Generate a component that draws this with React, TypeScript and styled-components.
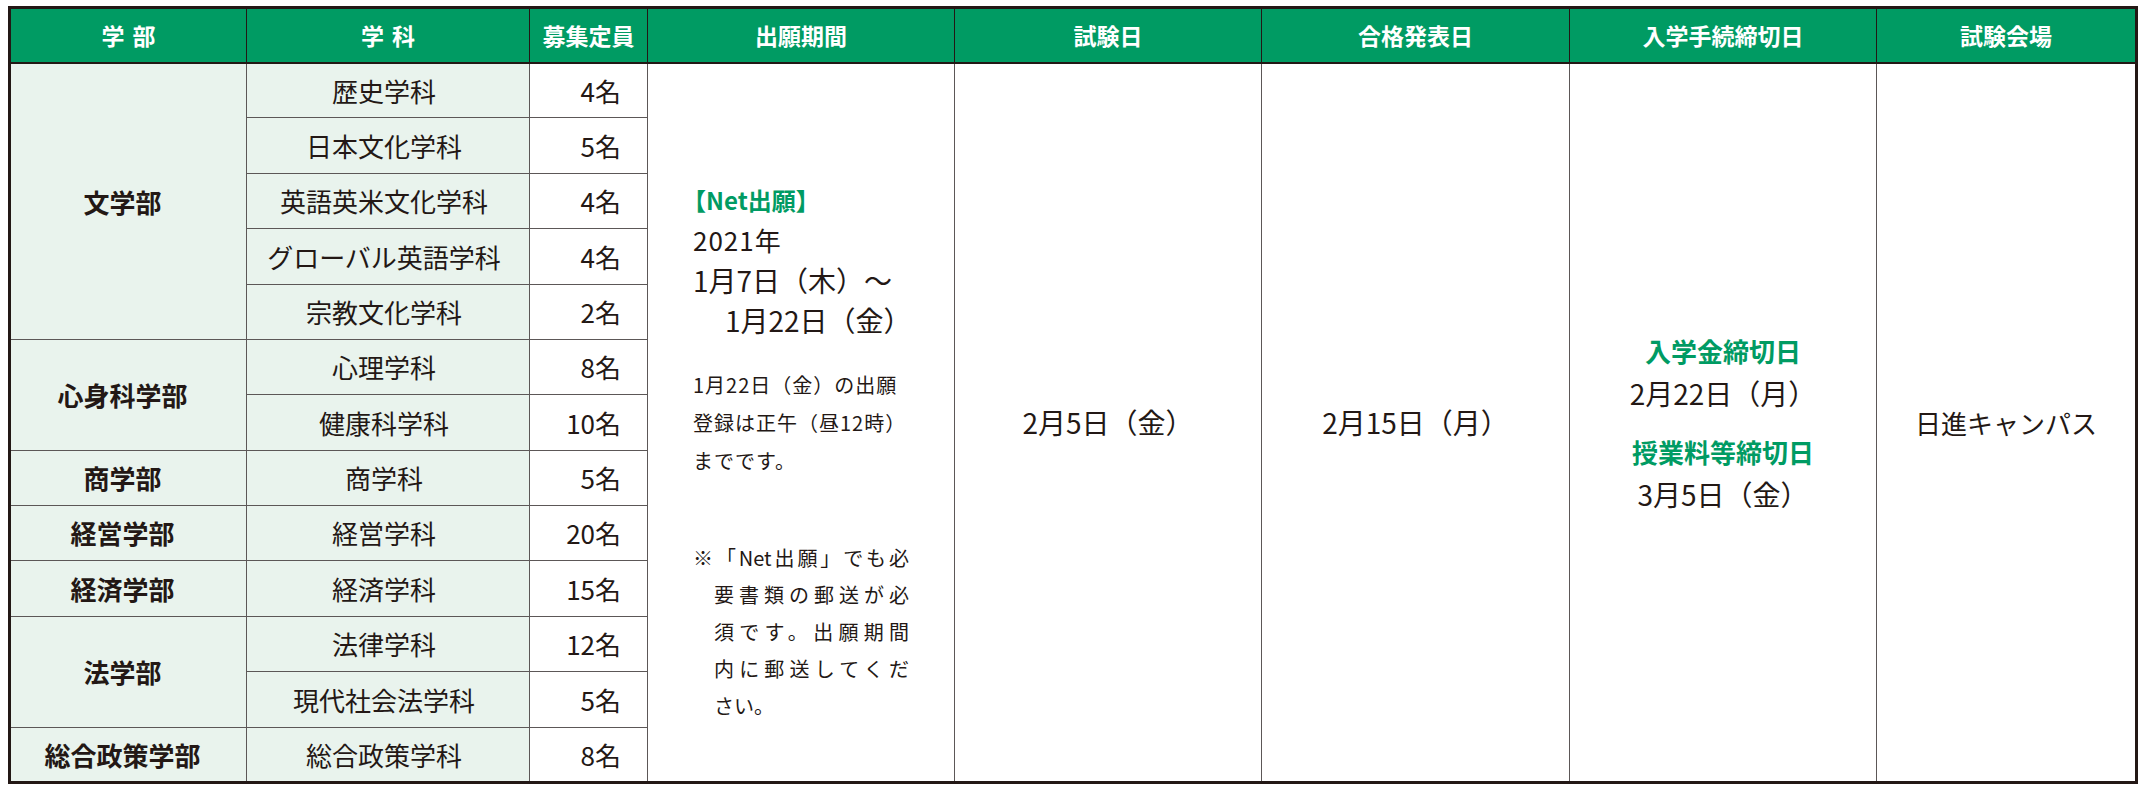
import styled, { createGlobalStyle } from 'styled-components';

const GREEN = '#009b63';
const INK = '#231815';
const MINT = '#e9f3ed';
const RULE = '#5c5757';

const GlobalStyle = createGlobalStyle`
  html, body {
    margin: 0;
    padding: 0;
    background: #fff;
  }
  body {
    font-family: 'Noto Sans CJK JP', 'Noto Sans', sans-serif;
    color: ${INK};
  }
`;

const Page = styled.div`
  padding: 6px 9px 0 8px;
`;

const Table = styled.table`
  width: 2127px;
  table-layout: fixed;
  border-collapse: collapse;
  border: 3px solid ${INK};
`;

const Col = styled.col<{ $w: number }>`
  width: ${(p) => p.$w}px;
`;

const HeadRow = styled.tr`
  height: 55px;
`;

const BodyRow = styled.tr<{ $h: number }>`
  height: ${(p) => p.$h}px;
`;

const Th = styled.th<{ $spaced?: boolean }>`
  background: ${GREEN};
  color: #fff;
  font-size: 23px;
  font-weight: 700;
  text-align: center;
  vertical-align: middle;
  padding: 0 0 0 ${(p) => (p.$spaced ? '8px' : '0')};
  letter-spacing: ${(p) => (p.$spaced ? '8px' : '0')};
  border-left: 1.5px solid ${INK};
  border-bottom: 2px solid ${INK};
`;

const Cell = styled.td`
  padding: 0;
  border: 1.5px solid ${RULE};
  font-size: 26px;
  line-height: 1.2;
  vertical-align: middle;
`;

const FacultyCell = styled(Cell)`
  background: ${MINT};
  font-weight: 700;
  text-align: center;
  padding-right: 12px;
`;

const DeptCell = styled(Cell)`
  background: ${MINT};
  text-align: center;
  padding-right: 8px;
`;

const QuotaCell = styled(Cell)`
  text-align: right;
  padding-right: 26px;
`;

const PeriodCell = styled(Cell)`
  vertical-align: top;
  padding: 116px 0 0 45px;
`;

const CenterCell = styled(Cell)`
  text-align: center;
`;

const NetLabel = styled.div`
  color: ${GREEN};
  font-size: 24px;
  font-weight: 700;
  line-height: 40px;
  margin-left: -11px;
`;

const Year = styled.div`
  font-size: 26px;
  line-height: 40px;
  letter-spacing: 1px;
`;

const BigDate = styled.div<{ $indent?: boolean }>`
  font-size: 28px;
  line-height: 40px;
  padding-left: ${(p) => (p.$indent ? '32px' : '0')};
`;

const Note = styled.div`
  margin-top: 26px;
  font-size: 20px;
  line-height: 38px;
  letter-spacing: 1px;
`;

const Caution = styled.div`
  width: 195px;
  margin-top: 59px;
  padding-left: 21px;
  font-size: 20px;
  line-height: 37px;
`;

const CautionLine = styled.span<{ $first?: boolean; $last?: boolean }>`
  display: block;
  text-align: justify;
  text-align-last: ${(p) => (p.$last ? 'left' : 'justify')};
  margin-left: ${(p) => (p.$first ? '-21px' : '0')};
`;

const DateText = styled.div`
  font-size: 28px;
  line-height: 42px;
`;

const GreenLabel = styled.div<{ $gap?: boolean }>`
  color: ${GREEN};
  font-size: 26px;
  font-weight: 700;
  line-height: 42px;
  margin-top: ${(p) => (p.$gap ? '17px' : '0')};
`;

const Venue = styled.div`
  font-size: 26px;
`;

const columns = [237, 283, 118, 307, 307, 308, 307, 260];

const faculties: { name: string; depts: [string, string][] }[] = [
  {
    name: '文学部',
    depts: [
      ['歴史学科', '4名'],
      ['日本文化学科', '5名'],
      ['英語英米文化学科', '4名'],
      ['グローバル英語学科', '4名'],
      ['宗教文化学科', '2名'],
    ],
  },
  {
    name: '心身科学部',
    depts: [
      ['心理学科', '8名'],
      ['健康科学科', '10名'],
    ],
  },
  { name: '商学部', depts: [['商学科', '5名']] },
  { name: '経営学部', depts: [['経営学科', '20名']] },
  { name: '経済学部', depts: [['経済学科', '15名']] },
  {
    name: '法学部',
    depts: [
      ['法律学科', '12名'],
      ['現代社会法学科', '5名'],
    ],
  },
  { name: '総合政策学部', depts: [['総合政策学科', '8名']] },
];

const totalRows = faculties.reduce((n, f) => n + f.depts.length, 0);
const BODY_HEIGHT = 720;

// spread the body height over whole-pixel rows
const rowHeight = (i: number) =>
  Math.round(((i + 1) * BODY_HEIGHT) / totalRows) -
  Math.round((i * BODY_HEIGHT) / totalRows);

const SharedCells = () => (
  <>
    <PeriodCell rowSpan={totalRows}>
      <NetLabel>【Net出願】</NetLabel>
      <Year>2021年</Year>
      <BigDate>1月7日（木）～</BigDate>
      <BigDate $indent>1月22日（金）</BigDate>
      <Note>
        1月22日（金）の出願
        <br />
        登録は正午（昼12時）
        <br />
        までです。
      </Note>
      <Caution>
        <CautionLine $first>※「Net出願」でも必</CautionLine>
        <CautionLine>要書類の郵送が必</CautionLine>
        <CautionLine>須です。出願期間</CautionLine>
        <CautionLine>内に郵送してくだ</CautionLine>
        <CautionLine $last>さい。</CautionLine>
      </Caution>
    </PeriodCell>
    <CenterCell rowSpan={totalRows}>
      <DateText>2月5日（金）</DateText>
    </CenterCell>
    <CenterCell rowSpan={totalRows}>
      <DateText>2月15日（月）</DateText>
    </CenterCell>
    <CenterCell rowSpan={totalRows}>
      <GreenLabel>入学金締切日</GreenLabel>
      <DateText>2月22日（月）</DateText>
      <GreenLabel $gap>授業料等締切日</GreenLabel>
      <DateText>3月5日（金）</DateText>
    </CenterCell>
    <CenterCell rowSpan={totalRows}>
      <Venue>日進キャンパス</Venue>
    </CenterCell>
  </>
);

const App = () => {
  let rowIndex = 0;

  return (
    <Page>
      <GlobalStyle />
      <Table>
        <colgroup>
          {columns.map((w, i) => (
            <Col key={i} $w={w} />
          ))}
        </colgroup>
        <thead>
          <HeadRow>
            <Th $spaced>学部</Th>
            <Th $spaced>学科</Th>
            <Th>募集定員</Th>
            <Th>出願期間</Th>
            <Th>試験日</Th>
            <Th>合格発表日</Th>
            <Th>入学手続締切日</Th>
            <Th>試験会場</Th>
          </HeadRow>
        </thead>
        <tbody>
          {faculties.map((f) =>
            f.depts.map(([dept, quota], i) => {
              const index = rowIndex;
              rowIndex += 1;
              return (
                <BodyRow key={dept} $h={rowHeight(index)}>
                  {i === 0 && (
                    <FacultyCell rowSpan={f.depts.length}>{f.name}</FacultyCell>
                  )}
                  <DeptCell>{dept}</DeptCell>
                  <QuotaCell>{quota}</QuotaCell>
                  {index === 0 && <SharedCells />}
                </BodyRow>
              );
            }),
          )}
        </tbody>
      </Table>
    </Page>
  );
};

export default App;
